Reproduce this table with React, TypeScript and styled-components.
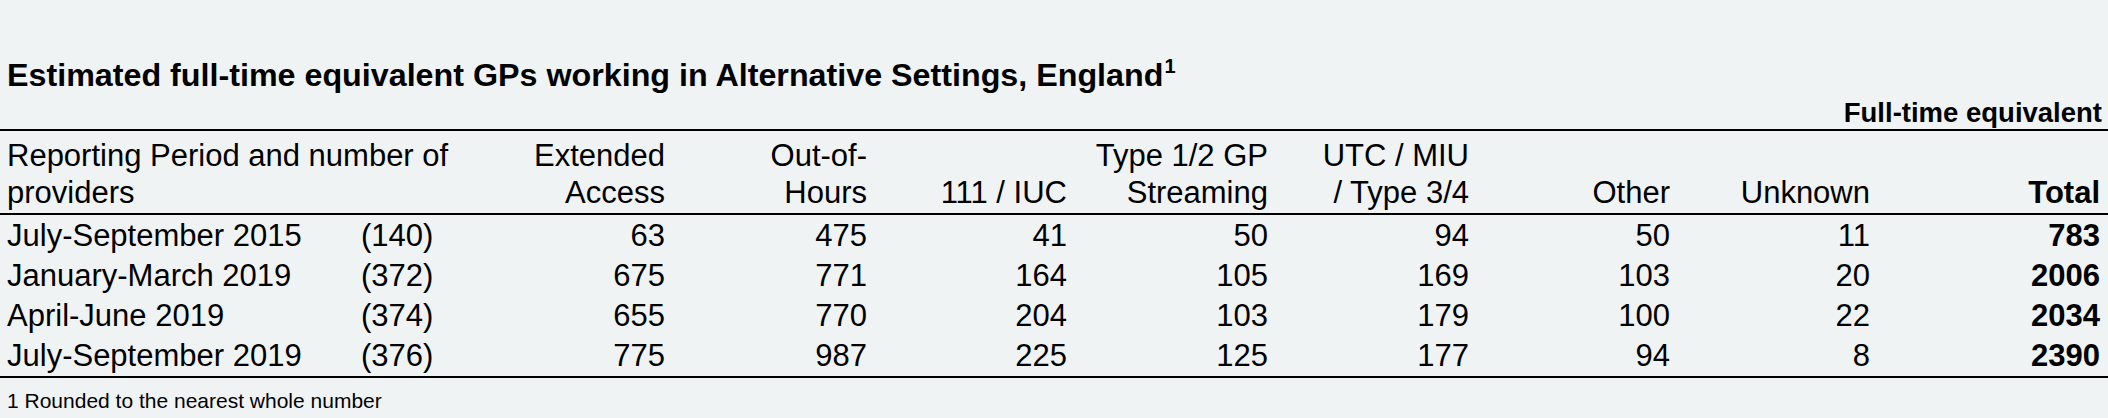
import React from 'react'
import styled, { createGlobalStyle } from 'styled-components'

/* ───── global ───── */
const GlobalStyle = createGlobalStyle`
  html, body { margin: 0; padding: 0; background: #f0f3f4; }
  body {
    font-family: "Liberation Sans", Arial, "Helvetica Neue", sans-serif;
    color: #000;
  }
`

/* ───── layout ───── */
// 10 columns: period | providers | 7 categories | total
const COLS = '354px 118px 201px 202px 200px 201px 201px 201px 200px 230px'

const Sheet = styled.main`
  width: 2108px;
  height: 418px;
  overflow: hidden;
`

const Title = styled.h1`
  margin: 0;
  padding: 55px 0 0 7px;
  font-size: 32.25px;
  line-height: 40px;
  font-weight: 700;
  white-space: nowrap;
  sup {
    font-size: 20px;
    line-height: 0;
    vertical-align: 13px;
    margin-left: 1px;
  }
`

const UnitLine = styled.div`
  margin-top: 1px;
  padding-right: 6px;
  text-align: right;
  font-size: 27.5px;
  line-height: 33px;
  font-weight: 700;
  border-bottom: 2px solid #000;
`

const HeadRow = styled.div`
  display: grid;
  grid-template-columns: ${COLS};
  align-items: end;
  padding: 6px 0 2px;
  border-bottom: 2px solid #000;
`

const HeadCell = styled.div<{ $span?: number; $left?: boolean; $bold?: boolean }>`
  grid-column: span ${({ $span }) => $span ?? 1};
  font-size: 31px;
  line-height: 37px;
  white-space: nowrap;
  font-weight: ${({ $bold }) => ($bold ? 700 : 400)};
  text-align: ${({ $left }) => ($left ? 'left' : 'right')};
  padding: ${({ $left }) => ($left ? '0 0 0 7px' : '0 8px 0 0')};
`

const Body = styled.div`
  padding-top: 1px;
  border-bottom: 2px solid #000;
`

const Row = styled.div`
  display: grid;
  grid-template-columns: ${COLS};
  height: 40px;
`

const Cell = styled.div<{ $left?: boolean; $bold?: boolean }>`
  font-size: 31px;
  line-height: 40px;
  white-space: nowrap;
  font-weight: ${({ $bold }) => ($bold ? 700 : 400)};
  text-align: ${({ $left }) => ($left ? 'left' : 'right')};
  padding: ${({ $left }) => ($left ? '0 0 0 7px' : '0 8px 0 0')};
`

const Footnote = styled.p`
  margin: 0;
  padding: 11px 0 0 7px;
  font-size: 21px;
  line-height: 24px;
`

/* ───── data ───── */
type Entry = {
  period: string
  providers: number
  values: number[]
  total: number
}

const headers: React.ReactNode[] = [
  <>Extended<br />Access</>,
  <>Out-of-<br />Hours</>,
  <>111 / IUC</>,
  <>Type 1/2 GP<br />Streaming</>,
  <>UTC / MIU<br />/ Type 3/4</>,
  <>Other</>,
  <>Unknown</>,
]

const rows: Entry[] = [
  { period: 'July-September 2015', providers: 140, values: [63, 475, 41, 50, 94, 50, 11], total: 783 },
  { period: 'January-March 2019', providers: 372, values: [675, 771, 164, 105, 169, 103, 20], total: 2006 },
  { period: 'April-June 2019', providers: 374, values: [655, 770, 204, 103, 179, 100, 22], total: 2034 },
  { period: 'July-September 2019', providers: 376, values: [775, 987, 225, 125, 177, 94, 8], total: 2390 },
]

export default function App() {
  return (
    <Sheet>
      <GlobalStyle />
      <Title>
        Estimated full-time equivalent GPs working in Alternative Settings, England<sup>1</sup>
      </Title>
      <UnitLine>Full-time equivalent</UnitLine>

      <HeadRow>
        <HeadCell $span={2} $left>
          Reporting Period and number of<br />providers
        </HeadCell>
        {headers.map((h, i) => (
          <HeadCell key={i}>{h}</HeadCell>
        ))}
        <HeadCell $bold>Total</HeadCell>
      </HeadRow>

      <Body>
        {rows.map(r => (
          <Row key={r.period}>
            <Cell $left>{r.period}</Cell>
            <Cell $left>({r.providers})</Cell>
            {r.values.map((v, i) => (
              <Cell key={i}>{v}</Cell>
            ))}
            <Cell $bold>{r.total}</Cell>
          </Row>
        ))}
      </Body>

      <Footnote>1 Rounded to the nearest whole number</Footnote>
    </Sheet>
  )
}
